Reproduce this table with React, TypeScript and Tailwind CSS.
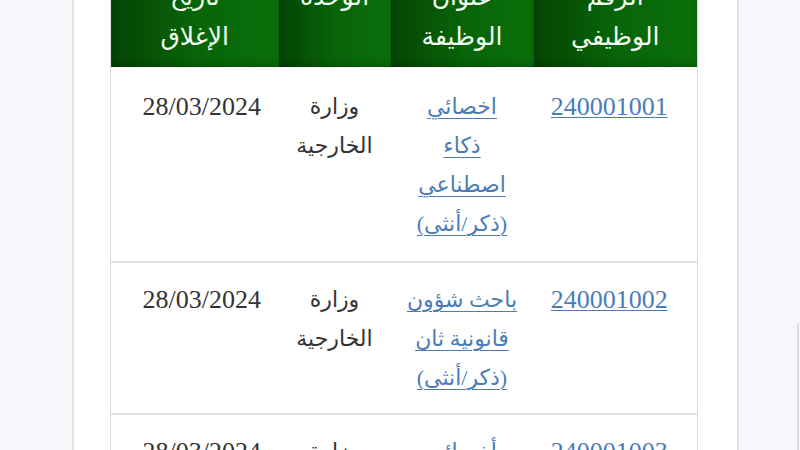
const jobs = [
  {
    id: "240001001",
    title: ["اخصائي", "ذكاء", "اصطناعي", "(ذكر/أنثى)"],
    unit: ["وزارة", "الخارجية"],
    date: "28/03/2024",
    row: "h-[195px]",
    pad: "pt-[20px]",
  },
  {
    id: "240001002",
    title: ["باحث شؤون", "قانونية ثان", "(ذكر/أنثى)"],
    unit: ["وزارة", "الخارجية"],
    date: "28/03/2024",
    row: "h-[152px]",
    pad: "pt-[17px]",
  },
  {
    id: "240001003",
    title: ["أخصائي", "لغات", "(ذكر/أنثى)"],
    unit: ["وزارة", "الخارجية"],
    date: "28/03/2024",
    row: "h-[152px]",
    pad: "pt-[17px]",
  },
];

const headers = [
  ["الرقم", "الوظيفي"],
  ["عنوان", "الوظيفة"],
  ["الوحدة", ""],
  ["تاريخ", "الإغلاق"],
];

export default function App() {
  return (
    <div className="w-[800px] h-[450px] overflow-hidden bg-[#f7f8fc] flex">
      <div className="w-[72px] shrink-0" />
      {/* content panel */}
      <div className="w-[667px] shrink-0 bg-white border-x-2 border-[#e4e5e8]">
        <div className="-mt-[33px] pl-[38px] pr-[39px]" dir="rtl">
          <table className="w-[587px] table-fixed border-collapse border-x border-[#dcdcdc] font-['Liberation_Serif','DejaVu_Sans',serif]">
            <colgroup>
              <col className="w-[164px]" />
              <col className="w-[143px]" />
              <col className="w-[112px]" />
              <col className="w-[168px]" />
            </colgroup>
            <thead>
              <tr>
                {headers.map((h, i) => (
                  <th
                    key={i}
                    className="h-[100px] bg-gradient-to-l from-[#0a6f0a] via-[#086508] to-[#044404] shadow-[inset_0_-4px_6px_rgba(0,0,0,0.18)] text-[#f2fff2] font-normal text-[25px] leading-[40px] pt-[10px] pb-[10px] px-1 align-top font-['DejaVu_Sans',sans-serif]"
                  >
                    <div>{h[0]}</div>
                    {h[1] && <div>{h[1]}</div>}
                  </th>
                ))}
              </tr>
            </thead>
            <tbody>
              {jobs.map((j) => (
                <tr key={j.id} className={`${j.row} border-b-2 border-[#e2e2e2] align-top leading-[39px]`}>
                  <td className={`${j.pad} text-center pb-0 pl-[16px] pr-[28px] text-[26px]`}>
                    <a href="#" className="text-[#4a7db6] underline underline-offset-2 decoration-1">
                      {j.id}
                    </a>
                  </td>
                  <td className={`${j.pad} text-center pb-0 px-1 text-[22px]`}>
                    {j.title.map((t, i) => (
                      <div key={i}>
                        <a href="#" className="text-[#4a7db6] underline underline-offset-4 decoration-1">
                          {t}
                        </a>
                      </div>
                    ))}
                  </td>
                  <td className={`${j.pad} text-center pb-0 px-2 text-[#333] text-[22px]`}>
                    {j.unit.map((u, i) => (
                      <div key={i}>{u}</div>
                    ))}
                  </td>
                  <td className={`${j.pad} text-center pb-0 pl-[18px] pr-[4px] text-[#333] text-[26px]`}>
                    {j.date}
                  </td>
                </tr>
              ))}
            </tbody>
          </table>
        </div>
      </div>
      <div className="flex-1 flex flex-col">
        <div className="h-[323px]" />
        <div className="flex-1 border-r-2 border-[#dcdde2] mr-[1px]" />
      </div>
    </div>
  );
}
